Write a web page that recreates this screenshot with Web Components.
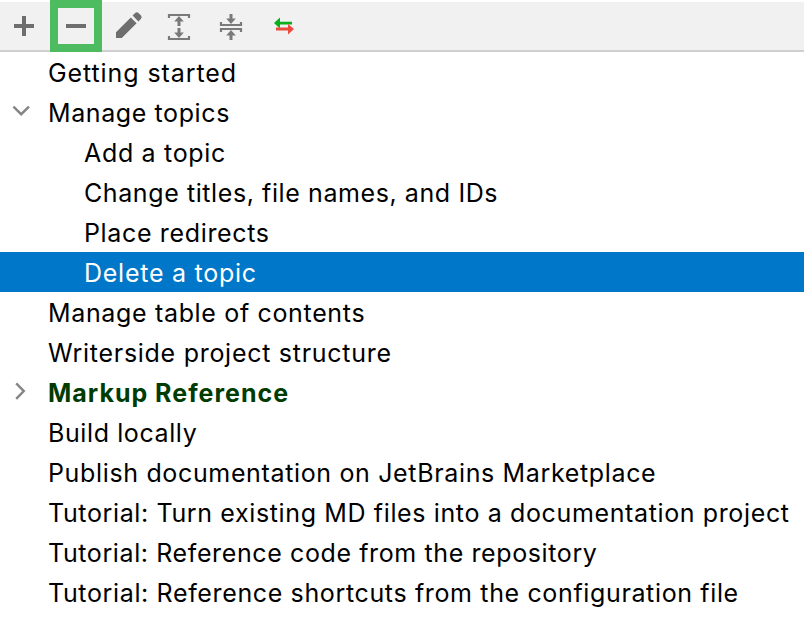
<!DOCTYPE html>
<html lang="en">
<head>
<meta charset="utf-8">
<title>Table of contents</title>
<style>
html, body { margin: 0; background: #fff; }
body { width: 804px; height: 620px; overflow: hidden; font-family: Inter, "Liberation Sans", sans-serif; color: #000; }
</style>
</head>
<body>
<toc-panel></toc-panel>
<script>
const ICONS = {
  add: '<path d="M22 16h4v8h8v4h-8v8h-4v-8h-8v-4h8z" fill="#6e6e6e"/>',
  remove: '<path d="M14 24h20v4H14z" fill="#6e6e6e"/>',
  edit: '<path d="M12 32.2 26.8 17.4 32.6 23.2 17.8 38H12zM28.6 15.6l2.6-2.6q1.6-1.4 3.2 0l2.6 2.6q1.4 1.6 0 3.2l-2.6 2.6z" fill="#6e6e6e"/>',
  expand: '<path d="M13 18v-3h20v3M13 36v3h20v-3" fill="none" stroke="#7a7a7a" stroke-width="2.2"/><path d="M23 19v7M23 28v7" stroke="#7a7a7a" stroke-width="3"/><path d="M23 16l4.8 5.4h-9.6zM23 38l4.8-5.4h-9.6z" fill="#7a7a7a"/>',
  collapse: '<path d="M13 22v3h20v-3M13 32v-3h20v3" fill="none" stroke="#7a7a7a" stroke-width="2.2"/><path d="M23 14v6M23 34v6" stroke="#7a7a7a" stroke-width="3"/><path d="M23 24l4.8-5.4h-9.6zM23 30l4.8 5.4h-9.6z" fill="#7a7a7a"/>',
  swap: '<path d="M14 23l6-5.4v4.1h12v2.8H20v4z" fill="#08b01c"/><path d="M34 29l-6-5v3.6H16v2.8h12v4z" fill="#ea4b3c"/>'
};

customElements.define('tool-button', class extends HTMLElement {
  connectedCallback() {
    this.attachShadow({ mode: 'open' }).innerHTML = `
      <style>
        :host { display: block; box-sizing: border-box; width: 52px; height: 52px; flex: none; }
        :host([highlighted]) { border: 8px solid #4dbb5f; }
        :host([highlighted]) svg { margin: -8px; }
        svg { display: block; width: 52px; height: 52px; }
      </style>
      <svg viewBox="-2 0 52 52" aria-hidden="true">${ICONS[this.getAttribute('icon')]}</svg>`;
  }
});

customElements.define('tool-bar', class extends HTMLElement {
  connectedCallback() {
    this.attachShadow({ mode: 'open' }).innerHTML = `
      <style>
        :host { display: flex; box-sizing: border-box; height: 52px;
          background: linear-gradient(#fff 2px, #f1f1f1 2px 50px, #cfcfcf 50px); }
        ::slotted(:first-child) { margin-left: -2px; }
      </style>
      <slot></slot>`;
  }
});

customElements.define('toc-item', class extends HTMLElement {
  connectedCallback() {
    const state = this.getAttribute('state');
    const arrow = state === 'open' ? '<path d="M13.4 14.6l7.8 7.6 7.8-7.6"/>'
      : state === 'closed' ? '<path d="M16.2 11.3l7.6 7.8-7.6 7.8"/>' : '';
    this.attachShadow({ mode: 'open' }).innerHTML = `
      <style>
        :host { display: flex; height: 40px; line-height: 40px; font-size: 25px; white-space: nowrap;
          letter-spacing: ${this.getAttribute('tracking') || 0.64}px; }
        :host([level="2"]) svg { margin-right: 36px; }
        :host([selected]) { background: #0077c8; color: #fff; }
        :host([bold]) { color: #003b00; font-weight: 700; }
        svg { width: 48px; height: 40px; flex: none; fill: none; stroke: #858585; stroke-width: 2.4; }
        span { padding-top: 1px; height: 39px; }
      </style>
      <svg aria-hidden="true">${arrow}</svg><span><slot></slot></span>`;
  }
});

customElements.define('toc-panel', class extends HTMLElement {
  connectedCallback() {
    this.attachShadow({ mode: 'open' }).innerHTML = `
      <style>:host { display: block; }</style>
      <tool-bar>
        <tool-button icon="add"></tool-button>
        <tool-button icon="remove" highlighted></tool-button>
        <tool-button icon="edit"></tool-button>
        <tool-button icon="expand"></tool-button>
        <tool-button icon="collapse"></tool-button>
        <tool-button icon="swap"></tool-button>
      </tool-bar>
      <toc-item tracking="0.91">Getting started</toc-item>
      <toc-item state="open" tracking="0.6">Manage topics</toc-item>
      <toc-item level="2" tracking="0.68">Add a topic</toc-item>
      <toc-item level="2" tracking="0.59">Change titles, file names, and IDs</toc-item>
      <toc-item level="2" tracking="0.65">Place redirects</toc-item>
      <toc-item level="2" tracking="0.74" selected>Delete a topic</toc-item>
      <toc-item tracking="0.66">Manage table of contents</toc-item>
      <toc-item tracking="0.72">Writerside project structure</toc-item>
      <toc-item state="closed" tracking="1" bold>Markup Reference</toc-item>
      <toc-item tracking="0.6">Build locally</toc-item>
      <toc-item tracking="0.65">Publish documentation on JetBrains Marketplace</toc-item>
      <toc-item tracking="0.63">Tutorial: Turn existing MD files into a documentation project</toc-item>
      <toc-item tracking="0.61">Tutorial: Reference code from the repository</toc-item>
      <toc-item tracking="0.64">Tutorial: Reference shortcuts from the configuration file</toc-item>`;
  }
});
</script>
</body>
</html>
